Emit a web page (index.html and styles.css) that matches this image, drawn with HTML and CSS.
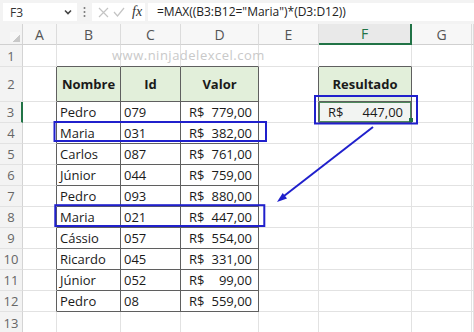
FILE: index.html
```html
<!DOCTYPE html>
<html lang="pt">
  <head>
    <meta charset="UTF-8" />
    <title>MAX com critério</title>
    <link rel="stylesheet" href="styles.css">
  </head>
  <body>
    <!-- Formula bar -->
    <div class="formula-bar">
      <div class="name-box">
        <span>F3</span>
        <svg class="chevron" width="8" height="6" viewBox="0 0 8 6"><polyline points="1,1.5 4,4.5 7,1.5" /></svg>
      </div>
      <svg class="bar-dots" width="3" height="12" viewBox="0 0 3 12">
        <circle cx="1.5" cy="2" r="1" /><circle cx="1.5" cy="6" r="1" /><circle cx="1.5" cy="10" r="1" />
      </svg>
      <div class="fx-box">
        <svg class="icon-x" width="11" height="11" viewBox="0 0 11 11"><path d="M1 1 L10 10 M10 1 L1 10" /></svg>
        <svg class="icon-check" width="12" height="10" viewBox="0 0 12 10"><path d="M1 5 L4.5 9 L11 1" /></svg>
        <span class="fx">fx</span>
      </div>
      <div class="formula-input">=MAX((B3:B12="Maria")*(D3:D12))</div>
    </div>

    <!-- Worksheet -->
    <table class="sheet">
      <colgroup>
        <col class="w-num" /><col class="w-a" /><col class="w-b" /><col class="w-c" />
        <col class="w-d" /><col class="w-e" /><col class="w-f" /><col class="w-g" /><col />
      </colgroup>
      <tr class="col-head">
        <th class="corner"></th><th>A</th><th>B</th><th>C</th><th>D</th><th>E</th>
        <th class="active">F</th><th>G</th><th></th>
      </tr>
      <tr class="r1">
        <th>1</th><td></td><td class="top"></td><td class="top"></td><td class="top"></td><td></td>
        <td class="top"></td><td></td><td></td>
      </tr>
      <tr class="r2">
        <th>2</th><td class="left"></td><td class="cell head">Nombre</td><td class="cell head">Id</td>
        <td class="cell head">Valor</td><td class="left"></td><td class="cell head">Resultado</td><td></td><td></td>
      </tr>
      <tr>
        <th class="active">3</th><td class="left"></td><td class="cell">Pedro</td><td class="cell">079</td>
        <td class="cell"><div class="money"><span>R$</span><span>779,00</span></div></td>
        <td class="left"></td>
        <td class="cell selected"><div class="money wide"><span>R$</span><span>447,00</span></div></td>
        <td></td><td></td>
      </tr>
      <tr>
        <th>4</th><td class="left"></td><td class="cell">Maria</td><td class="cell">031</td>
        <td class="cell"><div class="money"><span>R$</span><span>382,00</span></div></td>
        <td></td><td></td><td></td><td></td>
      </tr>
      <tr>
        <th>5</th><td class="left"></td><td class="cell">Carlos</td><td class="cell">087</td>
        <td class="cell"><div class="money"><span>R$</span><span>761,00</span></div></td>
        <td></td><td></td><td></td><td></td>
      </tr>
      <tr>
        <th>6</th><td class="left"></td><td class="cell">Júnior</td><td class="cell">044</td>
        <td class="cell"><div class="money"><span>R$</span><span>759,00</span></div></td>
        <td></td><td></td><td></td><td></td>
      </tr>
      <tr>
        <th>7</th><td class="left"></td><td class="cell">Pedro</td><td class="cell">093</td>
        <td class="cell"><div class="money"><span>R$</span><span>880,00</span></div></td>
        <td></td><td></td><td></td><td></td>
      </tr>
      <tr>
        <th>8</th><td class="left"></td><td class="cell">Maria</td><td class="cell">021</td>
        <td class="cell"><div class="money"><span>R$</span><span>447,00</span></div></td>
        <td></td><td></td><td></td><td></td>
      </tr>
      <tr>
        <th>9</th><td class="left"></td><td class="cell">Cássio</td><td class="cell">057</td>
        <td class="cell"><div class="money"><span>R$</span><span>554,00</span></div></td>
        <td></td><td></td><td></td><td></td>
      </tr>
      <tr>
        <th>10</th><td class="left"></td><td class="cell">Ricardo</td><td class="cell">045</td>
        <td class="cell"><div class="money"><span>R$</span><span>331,00</span></div></td>
        <td></td><td></td><td></td><td></td>
      </tr>
      <tr>
        <th>11</th><td class="left"></td><td class="cell">Júnior</td><td class="cell">052</td>
        <td class="cell"><div class="money"><span>R$</span><span>99,00</span></div></td>
        <td></td><td></td><td></td><td></td>
      </tr>
      <tr>
        <th>12</th><td class="left"></td><td class="cell">Pedro</td><td class="cell">08</td>
        <td class="cell"><div class="money"><span>R$</span><span>559,00</span></div></td>
        <td></td><td></td><td></td><td></td>
      </tr>
      <tr class="r13">
        <th>13</th><td></td><td></td><td></td><td></td><td></td><td></td><td></td><td></td>
      </tr>
    </table>

    <!-- Overlays: watermark, fill handle, highlight boxes and arrow -->
    <div class="watermark">www.ninjadelexcel.com</div>
    <svg class="marks" width="474" height="332" viewBox="0 0 474 332">
      <rect class="handle" x="409" y="118" width="4" height="4" />
      <rect x="54.5" y="122" width="211.5" height="19" />
      <rect x="55.3" y="205.2" width="209" height="20.8" />
      <rect x="315" y="96" width="102" height="27.5" />
      <line x1="373" y1="127" x2="284" y2="196" />
      <polygon points="277,202 287,198.6 282.7,193.1" />
    </svg>
  </body>
</html>
```

FILE: styles.css
```css
/* Global */
body {
  margin: 0;
  width: 474px;
  height: 332px;
  overflow: hidden;
  position: relative;
  font-family: "Open Sans", "Noto Sans", sans-serif;
  background-color: #ffffff;
  color: #222;
}

/* Formula bar */
.formula-bar {
  height: 24px;
  display: flex;
  align-items: center;
  padding: 0 0 0 3px;
  box-sizing: border-box;
  background-color: #f3f3f3;
  font-size: 12px;
}

.name-box {
  width: 74px;
  height: 18px;
  display: flex;
  align-items: center;
  justify-content: space-between;
  padding: 0 5px 0 7px;
  box-sizing: border-box;
  background-color: #fff;
  color: #333;
}

.chevron polyline {
  fill: none;
  stroke: #444;
  stroke-width: 1.6;
}

.bar-dots {
  margin: 0 6px 0 6px;
  fill: #777;
}

.fx-box {
  width: 53px;
  height: 18px;
  display: flex;
  align-items: center;
  gap: 4px;
  padding-left: 6px;
  box-sizing: border-box;
  background-color: #fff;
}

.icon-x path,
.icon-check path {
  fill: none;
  stroke: #c4c4c4;
  stroke-width: 1.2;
}

.fx {
  margin-left: 3px;
  font-family: "Liberation Serif", serif;
  font-style: italic;
  font-size: 14px;
  color: #333;
}

.formula-input {
  flex: 1;
  height: 18px;
  margin-left: 3px;
  padding-left: 9px;
  line-height: 18px;
  background-color: #fff;
  color: #222;
}

/* Worksheet grid */
.sheet {
  width: 474px;
  table-layout: fixed;
  border-collapse: separate;
  border-spacing: 0;
  font-size: 13px;
}

.w-num { width: 23px; }
.w-a { width: 34px; }
.w-b { width: 64px; }
.w-c { width: 60px; }
.w-d { width: 78px; }
.w-e { width: 60px; }
.w-f { width: 93px; }
.w-g { width: 60px; }

.sheet th,
.sheet td {
  padding: 0;
  border-right: 1px solid #e2e2e2;
  border-bottom: 1px solid #e2e2e2;
  white-space: nowrap;
  overflow: hidden;
}

.sheet tr { height: 21px; }
.sheet tr.col-head { height: 19px; }
.sheet tr.r1 { height: 22px; }
.sheet tr.r2 { height: 35px; }
.sheet tr.r13 { height: 22px; }

.col-head th {
  background-color: #f7f7f7;
  border-right-color: #dcdcdc;
  border-bottom-color: #d0d0d0;
  font-weight: 400;
  font-size: 14px;
  color: #555;
}

.col-head th.active {
  background-color: #e9e9e9;
  color: #217346;
  border-bottom: 2px solid #217346;
}

.col-head th.corner {
  background: linear-gradient(135deg, #f7f7f7 62%, #c8c8c8 62%) no-repeat right 2px bottom 2px / 10px 10px, #f7f7f7;
}

.sheet tr th:first-child {
  background-color: #f3f3f3;
  border-right-color: #d4d4d4;
  font-weight: 400;
  font-size: 13px;
  color: #666;
}

.sheet tr th.active {
  border-right: 2px solid #217346;
}

/* Bordered table cells */
.sheet td.left { border-right-color: #5f5f5f; }
.sheet td.top { border-bottom-color: #5f5f5f; }

.sheet td.cell {
  padding-left: 3px;
  border-right-color: #5f5f5f;
  border-bottom-color: #5f5f5f;
  color: #1a1a1a;
}

.sheet td.head {
  padding-left: 0;
  text-align: center;
  font-weight: 700;
  background-color: #e2efda;
}

.money {
  display: flex;
  justify-content: space-between;
  padding: 0 6px 0 5px;
}

.money.wide {
  padding: 0 8px 0 6px;
}

.sheet td.selected {
  background-color: #f2f4f2;
  box-shadow: inset 0 0 0 1px #4e8a5c;
}

/* Overlays */
.watermark {
  position: absolute;
  left: 112px;
  top: 46px;
  font-size: 13px;
  letter-spacing: 0.5px;
  color: #c9c9c9;
}

.marks {
  position: absolute;
  left: 0;
  top: 0;
  pointer-events: none;
}

.marks rect {
  fill: none;
  stroke: #2020cc;
  stroke-width: 2;
}

.marks rect.handle {
  fill: #217346;
  stroke: none;
}

.marks line {
  stroke: #2020cc;
  stroke-width: 2;
}

.marks polygon {
  fill: #2020cc;
}
```
